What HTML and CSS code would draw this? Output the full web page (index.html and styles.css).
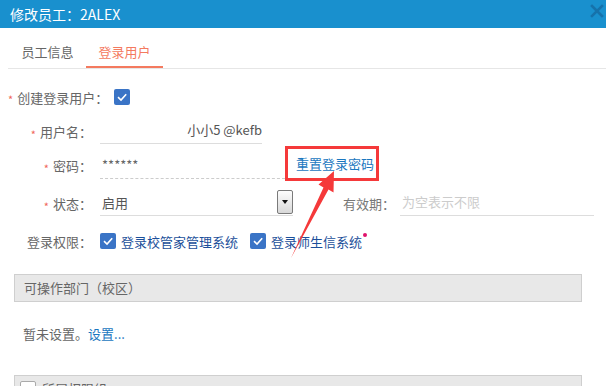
FILE: index.html
```html
<!DOCTYPE html>
<html lang="zh-CN">
<head>
  <meta charset="UTF-8">
  <link rel="stylesheet" href="styles.css">
</head>
<body>
  <div class="dialog">
    <div class="titlebar">
      <span class="title">修改员工：2ALEX</span>
      <svg class="close" width="14" height="14" viewBox="0 0 14 14">
        <path d="M2 2 L12 12 M12 2 L2 12" stroke="#1672ab" stroke-width="2.6" stroke-linecap="square"/>
      </svg>
    </div>

    <div class="tabs">
      <div class="tab">员工信息</div>
      <div class="tab active">登录用户</div>
    </div>

    <div class="form">
      <div class="row row-first">
        <span class="star">*</span>
        <span class="label-free">创建登录用户：</span>
        <svg class="check" width="16" height="16" viewBox="0 0 16 16">
          <rect width="16" height="16" rx="2" fill="#3a74c6"/>
          <path d="M4 8.2 L7 11 L12.2 5.2" stroke="#fff" stroke-width="1.6" fill="none"/>
        </svg>
      </div>

      <div class="row row-user">
        <label class="label"><span class="star">*</span>用户名：</label>
        <div class="field field-user"><span class="value">小小5 @kefb</span></div>
      </div>

      <div class="row row-pass">
        <label class="label"><span class="star">*</span>密码：</label>
        <div class="field field-pass">******</div>
        <div class="mark"><a class="link">重置登录密码</a></div>
      </div>

      <div class="row row-state">
        <label class="label"><span class="star">*</span>状态：</label>
        <div class="field field-select">
          <span>启用</span>
          <span class="drop"><i class="caret"></i></span>
        </div>
        <label class="label-plain">有效期：</label>
        <div class="field field-date">为空表示不限</div>
      </div>

      <div class="row row-perm">
        <label class="label">登录权限：</label>
        <svg class="check" width="16" height="16" viewBox="0 0 16 16">
          <rect width="16" height="16" rx="2" fill="#3a74c6"/>
          <path d="M4 8.2 L7 11 L12.2 5.2" stroke="#fff" stroke-width="1.6" fill="none"/>
        </svg>
        <span class="perm">登录校管家管理系统</span>
        <svg class="check" width="16" height="16" viewBox="0 0 16 16">
          <rect width="16" height="16" rx="2" fill="#3a74c6"/>
          <path d="M4 8.2 L7 11 L12.2 5.2" stroke="#fff" stroke-width="1.6" fill="none"/>
        </svg>
        <span class="perm">登录师生信系统<i class="dot"></i></span>
      </div>

      <div class="section">可操作部门（校区）</div>
      <div class="empty">暂未设置。<a class="link">设置...</a></div>

      <div class="section section-cut">
        <span class="box"></span>所属权限组
      </div>
    </div>

    <svg class="arrow" width="70" height="100" viewBox="280 165 70 100">
      <polygon points="291,258 323.5,187.5 318.5,184.5 334,171 333.5,192.5 328.5,189.5" fill="#f5393a"/>
    </svg>
  </div>
</body>
</html>
```

FILE: styles.css
```css
body {
  margin: 0;
  background: #fff;
  font-family: "Microsoft YaHei", "Noto Sans CJK SC", "Noto Sans", sans-serif;
  font-size: 13px;
  color: #555;
  overflow: hidden;
}

.dialog {
  position: relative;
  width: 606px;
  height: 386px;
  overflow: hidden;
}

.titlebar {
  height: 28px;
  background: #1990ce;
  display: flex;
  align-items: center;
  justify-content: space-between;
  padding: 0 2px 0 10px;
}

.title {
  color: #fff;
  font-size: 14px;
}

.close {
  margin-top: -6px;
}

.tabs {
  display: flex;
  height: 40px;
  margin-left: 8px;
  border-bottom: 1px solid #e6e6e6;
}

.tab {
  width: 77px;
  text-align: center;
  line-height: 48px;
  color: #666;
  box-sizing: border-box;
}

.tab:first-child {
  margin-left: 1px;
}

.tab.active {
  color: #f47a5f;
  border-bottom: 2px solid #f47a5f;
}

.form {
  padding: 0 24px 0 14px;
}

.row {
  display: flex;
  align-items: center;
  white-space: nowrap;
}

.row > * {
  flex-shrink: 0;
}

.row-first {
  margin-left: -6px;
  height: 34px;
  margin-top: 11px;
}

.row-user {
  height: 34px;
}

.row-pass {
  height: 34px;
}

.row-state {
  height: 36px;
  margin-top: 3px;
}

.row-perm {
  height: 36px;
  margin-top: 2px;
}

.star {
  color: #f0665a;
  font-size: 11px;
  margin-right: 4px;
  position: relative;
  top: 2px;
}

.label-free {
  color: #666;
  margin-right: 6px;
}

.label {
  width: 78px;
  text-align: right;
  color: #666;
  margin-right: 8px;
}

.field {
  height: 24px;
  line-height: 24px;
  border-bottom: 1px solid #ddd;
  box-sizing: border-box;
  padding-left: 2px;
  position: relative;
}

.field-user {
  width: 162px;
  text-align: right;
  padding-right: 0;
  height: 26px;
}

.value {
  color: #555;
  font-size: 13px;
}

.field-pass {
  width: 185px;
  border-bottom: 1px dashed #ccc;
  color: #666;
  height: 28px;
  line-height: 28px;
}

.mark {
  border: 3px solid #f5393a;
  height: 35px;
  width: 94px;
  box-sizing: border-box;
  display: flex;
  align-items: center;
  padding-left: 8px;
  margin-top: -4px;
}

.link {
  color: #1a77c0;
  cursor: pointer;
}

.field-select {
  width: 193px;
  display: flex;
  justify-content: space-between;
  align-items: center;
  height: 25px;
}

.drop {
  width: 16px;
  height: 24px;
  box-sizing: border-box;
  border: 1px solid #7a7a7a;
  border-radius: 2px;
  background: linear-gradient(#fdfdfd, #d8d8d8);
  display: flex;
  align-items: center;
  justify-content: center;
  margin-top: -2px;
}

.caret {
  width: 0;
  height: 0;
  border-left: 3.5px solid transparent;
  border-right: 3.5px solid transparent;
  border-top: 4px solid #111;
}

.label-plain {
  margin-left: 50px;
  margin-right: 5px;
  color: #777;
}

.field-date {
  width: 194px;
  color: #ccc;
  height: 26px;
  padding-left: 2px;
}

.row-perm .check {
  margin-right: 5px;
}

.perm {
  color: #1b4f9a;
  margin-right: 12px;
  position: relative;
}

.dot {
  position: absolute;
  right: -5px;
  top: 1px;
  width: 4px;
  height: 4px;
  border-radius: 50%;
  background: #e0126c;
}

.section {
  margin-top: 15px;
  height: 28px;
  box-sizing: border-box;
  border: 1px solid #cfcfcf;
  background: #e8e8e8;
  color: #666;
  line-height: 26px;
  padding-left: 9px;
}

.empty {
  padding: 0 0 0 9px;
  height: 60px;
  line-height: 38px;
  margin-top: 13px;
  color: #666;
}

.section-cut {
  margin-top: 0;
  display: flex;
  align-items: center;
  padding-left: 5px;
}

.box {
  width: 14px;
  height: 14px;
  border: 1px solid #aaa;
  border-radius: 2px;
  background: #fff;
  margin-right: 6px;
}

.arrow {
  position: absolute;
  left: 280px;
  top: 165px;
}
```
